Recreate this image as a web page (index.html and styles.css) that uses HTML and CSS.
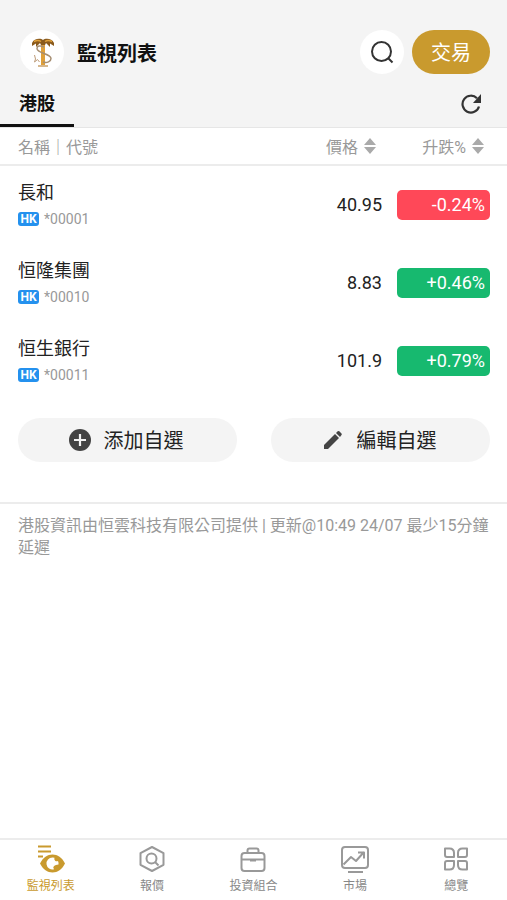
FILE: index.html
```
<!DOCTYPE html>
<html lang="zh-Hant">
<head>
  <meta charset="UTF-8">
  <meta name="viewport" content="width=device-width, initial-scale=1.0">
  <title>監視列表</title>
  <link rel="stylesheet" href="styles.css">
</head>
<body>
  <header class="header">
    <div class="top-bar">
      <span class="logo">
        <svg width="30" height="34" viewBox="0 0 30 34" fill="none">
          <path d="M14 6h4v24h-4z" fill="#dfa03a"/>
          <path d="M16 5C14 3 7 3 5 8v3l4-2.500V12l4-4 1 2h4l1-2 4 4V8.500l4 2.500V8C25 3 18 3 16 5z" fill="#8a5a1c"/>
          <path d="M7 6.500q4-2 7 0M18 6.500q3-2 7 0" stroke="#dfa03a" stroke-width="1.500"/>
          <path d="M17 12c-4-2-7-1-7 1.500 0 5 14 5 14 10 0 3-4 5-8 3.500" stroke="#a68e72" stroke-width="1.500"/>
          <path d="M7.500 20l1 4-1 3 3-2.500 2 2.500" stroke="#bd9b78"/>
          <path d="M11 31h10" stroke="#c9a06a" stroke-width="1.500"/>
        </svg>
      </span>
      <h1>監視列表</h1>
      <button class="search" aria-label="搜尋">
        <svg width="24" height="24" viewBox="0 0 24 24" fill="none" stroke="#333" stroke-width="2">
          <circle cx="11.500" cy="11.500" r="9.500"/>
          <path d="M18 18l4.500 4.500"/>
        </svg>
      </button>
      <button class="trade">交易</button>
    </div>
    <div class="tabs">
      <a class="tab" href="#hk">港股</a>
      <button class="refresh" aria-label="重新整理">
        <svg width="20" height="20" viewBox="0 0 20 20" fill="none">
          <path d="M16 4.300A8.400 8.400 0 1 0 18 12.500" stroke="#333" stroke-width="2.200"/>
          <path d="M20 0v9h-8z" fill="#333"/>
        </svg>
      </button>
    </div>
  </header>

  <main id="hk">
    <table class="stocks">
      <thead>
        <tr>
          <th class="name">名稱｜代號</th>
          <th class="price"><button class="sort">價格 <svg width="12" height="16" viewBox="0 0 12 16" fill="#aaa"><path d="M6 0l6 7H0zM6 16l6-7H0z"/></svg></button></th>
          <th class="change"><button class="sort">升跌% <svg width="12" height="16" viewBox="0 0 12 16" fill="#aaa"><path d="M6 0l6 7H0zM6 16l6-7H0z"/></svg></button></th>
        </tr>
      </thead>
      <tbody>
        <tr>
          <td class="name">長和<div class="code"><span class="market">HK</span>*00001</div></td>
          <td class="price">40.95</td>
          <td class="change"><span class="pill down">-0.24%</span></td>
        </tr>
        <tr>
          <td class="name">恒隆集團<div class="code"><span class="market">HK</span>*00010</div></td>
          <td class="price">8.83</td>
          <td class="change"><span class="pill up">+0.46%</span></td>
        </tr>
        <tr>
          <td class="name">恒生銀行<div class="code"><span class="market">HK</span>*00011</div></td>
          <td class="price">101.9</td>
          <td class="change"><span class="pill up">+0.79%</span></td>
        </tr>
      </tbody>
    </table>

    <div class="actions">
      <button class="action">
        <svg width="22" height="22" viewBox="0 0 22 22">
          <circle cx="11" cy="11" r="11" fill="#444"/>
          <path d="M11 5v12M5 11h12" stroke="#f4f4f4" stroke-width="2.200"/>
        </svg>
        添加自選
      </button>
      <button class="action">
        <svg width="22" height="22" viewBox="0 0 22 22" fill="#444">
          <path d="M2 16L13 5l4 4L6 20H2z"/>
          <path d="M14 4l1.700-1.700q.8-.7 1.600 0l2.200 2.200q.7.800 0 1.600L18 8z"/>
        </svg>
        編輯自選
      </button>
    </div>
    <p class="notice">港股資訊由恒雲科技有限公司提供 | 更新@10:49 24/07 最少15分鐘延遲</p>
  </main>

  <nav class="bottom-nav">
    <a class="active" href="#watchlist">
      <svg width="28" height="28" viewBox="0 0 28 28" fill="none">
        <path d="M1 1.500h13M1 6.500h13M1 11.500h5" stroke="#c99a2e" stroke-width="2.200"/>
        <path d="M3 18.500C6 12.500 10.500 9.500 15.500 9.500S25 12.500 28 18.500c-3 6-7.500 9-12.500 9S6 24.500 3 18.500z" fill="#c99a2e"/>
        <path d="M15.500 12.500a6 6 0 1 0 1.500 11.800q-1.500-1.800 0-3.300t4.500-1.500a6 6 0 0 0-.5-3.500 2.500 2.500 0 0 1-3.500-3.200z" fill="#fff"/>
      </svg>
      監視列表
    </a>
    <a href="#quote">
      <svg width="28" height="28" viewBox="0 0 28 28" fill="none" stroke="#999" stroke-width="2" stroke-linejoin="round">
        <path d="M14 2l11.500 6.200v11.600L14 26 2.500 19.800V8.200z"/>
        <circle cx="13.500" cy="13.500" r="5"/>
        <path d="M17 17l3.500 3.500"/>
      </svg>
      報價
    </a>
    <a href="#portfolio">
      <svg width="28" height="28" viewBox="0 0 28 28" fill="none" stroke="#999" stroke-width="2" stroke-linejoin="round">
        <rect x="2.500" y="8" width="23" height="18" rx="3"/>
        <path d="M8.500 8V5.500q0-2 2-2h7q2 0 2 2V8M2.500 14.500h23M11 15.500h6"/>
      </svg>
      投資組合
    </a>
    <a href="#market">
      <svg width="28" height="28" viewBox="0 0 28 28" fill="none" stroke="#999" stroke-width="2" stroke-linejoin="round">
        <rect x="1" y="2" width="26" height="21" rx="3"/>
        <path d="M2.500 19.500l7.500-7.500 5 4 8-9M17 7.500h6v6M7 27h15"/>
      </svg>
      市場
    </a>
    <a href="#overview">
      <svg width="28" height="28" viewBox="0 0 28 28" fill="none" stroke="#999" stroke-width="2" stroke-linejoin="round">
        <path d="M3 3.500h4.500q4.500 0 4.500 4.500v4H5q-2 0-2-2zM25 3.500h-4.500q-4.500 0-4.500 4.500v4h7q2 0 2-2zM5 16h7v4q0 4.500-4.500 4.500H3V18q0-2 2-2zM23 16h-7v4q0 4.500 4.500 4.500H25V18q0-2-2-2z"/>
      </svg>
      總覽
    </a>
  </nav>
</body>
</html>
```
FILE: styles.css
```
* {
  box-sizing: border-box;
}
body {
  display: flex;
  flex-direction: column;
  min-height: 100vh;
  margin: 0;
  font-family: Roboto, "Noto Sans CJK TC", sans-serif;
  color: #222;
  background-color: white;
}
button {
  padding: 0;
  border: none;
  background: none;
  font: inherit;
  color: inherit;
  cursor: pointer;
}
a {
  color: inherit;
  text-decoration: none;
}
svg {
  display: block;
  flex: none;
}
.header {
  padding-top: 30px;
  background-color: #f4f4f4;
  border-bottom: 1px solid #e6e6e6;
}
.top-bar {
  display: flex;
  align-items: center;
  padding: 0 17px 0 20px;
}
.logo, .search {
  display: flex;
  align-items: center;
  justify-content: center;
  width: 44px;
  height: 44px;
  border-radius: 50%;
  background-color: white;
}
h1 {
  flex: 1;
  margin: 0 0 0 13px;
  padding-top: 3px;
  font-size: 20px;
  line-height: 28px;
  color: #111;
}
.trade {
  width: 78px;
  height: 44px;
  margin-left: 8px;
  padding-bottom: 2px;
  border-radius: 22px;
  background-color: #c99a2e;
  color: white;
  font-size: 20px;
}
.tabs {
  display: flex;
  align-items: center;
  justify-content: space-between;
  padding-right: 26px;
}
.tab {
  padding: 16px 19px 6px;
  border-bottom: 3px solid #111;
  font-size: 18px;
  font-weight: bold;
  line-height: 28px;
  color: #111;
}
.refresh {
  padding-top: 6px;
}
.stocks {
  width: 100%;
  border-spacing: 0;
  table-layout: fixed;
}
.stocks th {
  height: 38px;
  padding: 0;
  border-bottom: 2px solid #ececec;
  font-size: 16px;
  font-weight: normal;
  color: #999;
}
.stocks td {
  height: 78px;
  padding: 0;
  font-size: 18px;
  line-height: 28px;
}
.stocks .name {
  padding-left: 18px;
  text-align: left;
}
.stocks .price {
  width: 120px;
  text-align: right;
}
.stocks .change {
  width: 125px;
  padding-right: 17px;
  text-align: right;
}
.stocks th.price {
  padding-right: 6px;
}
.stocks th.change {
  padding-right: 23px;
}
.sort {
  display: inline-flex;
  align-items: center;
  gap: 6px;
}
.code {
  display: flex;
  align-items: center;
  gap: 5px;
  font-size: 14px;
  line-height: 24px;
  color: #999;
}
.market {
  width: 21px;
  border-radius: 3px;
  background-color: #2491ee;
  color: white;
  font-size: 12px;
  font-weight: bold;
  line-height: 14px;
  text-align: center;
}
.pill {
  display: inline-block;
  width: 93px;
  padding-right: 5px;
  border-radius: 5px;
  color: white;
  line-height: 30px;
}
.up {
  background-color: #17b96f;
}
.down {
  background-color: #ff4858;
}
.actions {
  display: grid;
  grid-template-columns: 1fr 1fr;
  gap: 34px;
  padding: 18px 17px 40px 18px;
}
.action {
  display: flex;
  align-items: center;
  justify-content: center;
  gap: 13px;
  height: 44px;
  padding: 0 3px 1px 0;
  border-radius: 22px;
  background-color: #f4f4f4;
  font-size: 20px;
}
.notice {
  margin: 0;
  padding: 11px 18px;
  border-top: 2px solid #ececec;
  font-size: 16px;
  line-height: 22px;
  color: #999;
}
.bottom-nav {
  display: grid;
  grid-template-columns: repeat(5, 1fr);
  margin-top: auto;
  border-top: 2px solid #ececec;
}
.bottom-nav a {
  display: flex;
  flex-direction: column;
  align-items: center;
  gap: 4px;
  padding: 5px 0 4px;
  font-size: 12px;
  line-height: 19px;
  color: #888;
}
.bottom-nav .active {
  color: #c99a2e;
}
```
